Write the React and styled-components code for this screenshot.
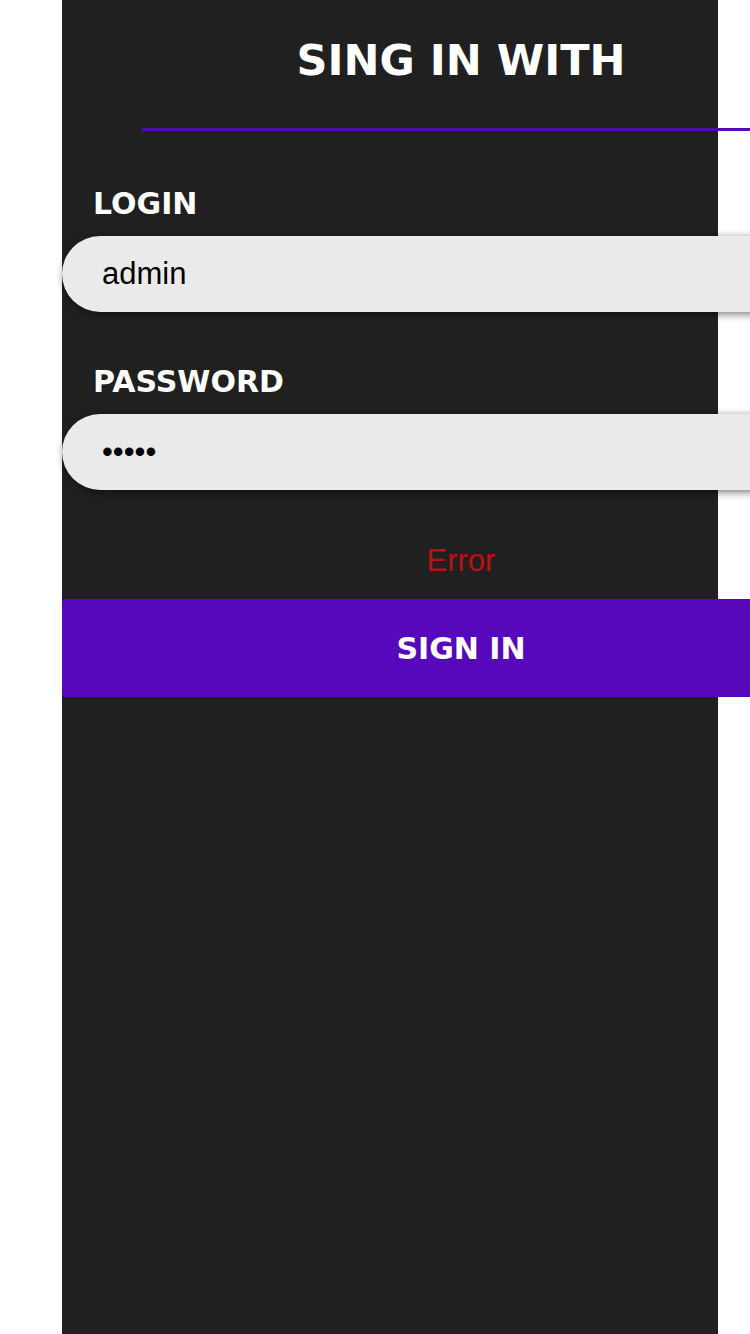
import React from 'react';
import styled, { createGlobalStyle } from 'styled-components';

const GlobalStyle = createGlobalStyle`
  html, body {
    margin: 0;
    padding: 0;
    background: #ffffff;
    overflow-x: hidden;
  }
`;

const Panel = styled.main`
  width: 656px;
  min-height: 100vh;
  margin-left: 62px;
  background-color: #202020;
`;

const Form = styled.form`
  width: 798px;
  display: flex;
  flex-direction: column;
  padding-top: 35px;
`;

const Title = styled.h1`
  margin: 0;
  font-family: Tahoma, "DejaVu Sans", sans-serif;
  font-weight: bold;
  font-size: 43px;
  line-height: 50px;
  color: #ffffff;
  text-align: center;
`;

const Divider = styled.hr`
  width: 80%;
  height: 3px;
  margin: 43px auto 0;
  border: none;
  background-color: #5808bb;
`;

const Label = styled.label`
  display: block;
  margin: ${(props) => (props.first ? '55px' : '52px')} 0 14px 31px;
  font-family: Tahoma, "DejaVu Sans", sans-serif;
  font-weight: bold;
  font-size: 30px;
  line-height: 36px;
  color: #ffffff;
`;

const Input = styled.input`
  box-sizing: border-box;
  width: 100%;
  height: 76px;
  padding: 0 0 0 40px;
  border: none;
  border-radius: 38px;
  outline: none;
  background-color: #eaeaea;
  box-shadow: 2px 2px 8px rgba(0, 0, 0, 0.55);
  font-family: "Liberation Sans", Arial, sans-serif;
  font-size: 31px;
  color: #000000;
`;

const ErrorText = styled.p`
  margin: 53px 0 20px;
  font-family: "Liberation Sans", Arial, sans-serif;
  font-size: 31px;
  line-height: 36px;
  color: #bb1111;
  text-align: center;
`;

const SubmitButton = styled.button`
  height: 98px;
  width: 100%;
  border: none;
  border-radius: 3px;
  background-color: #5808bb;
  font-family: Tahoma, "DejaVu Sans", sans-serif;
  font-weight: bold;
  font-size: 30px;
  color: #ffffff;
  display: flex;
  align-items: center;
  justify-content: center;
  padding: 0;
`;

export default function App() {
  return (
    <>
      <GlobalStyle />
      <Panel>
        <Form onSubmit={(e) => e.preventDefault()}>
          <Title>SING IN WITH</Title>
          <Divider />
          <Label first htmlFor="login">LOGIN</Label>
          <Input id="login" type="text" defaultValue="admin" readOnly />
          <Label htmlFor="password">PASSWORD</Label>
          <Input id="password" type="password" defaultValue="admin" readOnly />
          <ErrorText>Error</ErrorText>
          <SubmitButton type="submit">SIGN IN</SubmitButton>
        </Form>
      </Panel>
    </>
  );
}
